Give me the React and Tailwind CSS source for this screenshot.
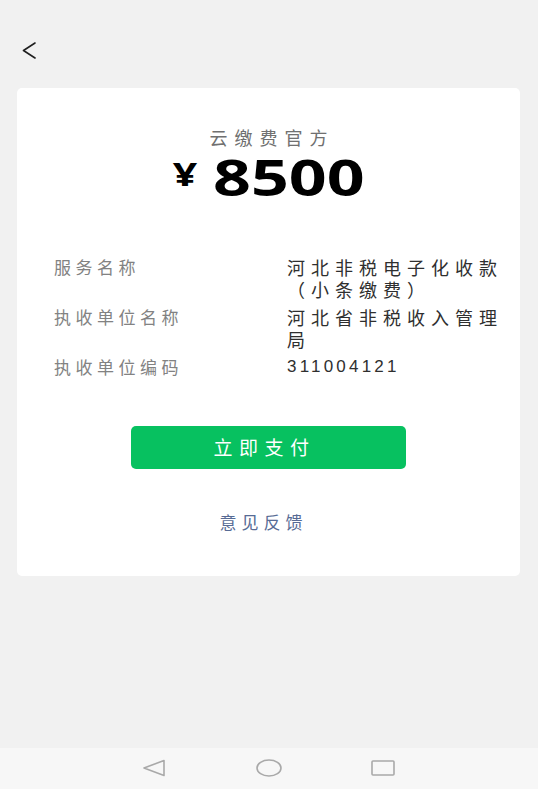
import React from 'react';

const CJK = { fontFamily: '"Noto Sans CJK SC", "Noto Sans", sans-serif' };

const ROWS = [
  { label: '服务名称', value: '河北非税电子化收款（小条缴费）' },
  { label: '执收单位名称', value: '河北省非税收入管理局' },
  { label: '执收单位编码', value: '311004121', numeric: true },
];

function NavBar() {
  return (
    <div className="h-[41px] bg-[#f7f7f7] flex items-center">
      <svg width="538" height="41" viewBox="0 0 538 41" fill="none" stroke="#a9a9a9" strokeWidth="1.6">
        <path d="M164 12.5 L144 20 L164 27.5 Z" strokeLinejoin="round" />
        <ellipse cx="269" cy="20" rx="12" ry="8" />
        <rect x="372" y="13" width="22" height="14" rx="1" />
      </svg>
    </div>
  );
}

export default function App() {
  return (
    <div className="min-h-screen bg-[#f1f1f1] flex flex-col" style={CJK}>
      {/* Header */}
      <div className="h-[88px] pt-[42px] pl-[22px]">
        <svg width="14" height="17" viewBox="0 0 14 17" fill="none" stroke="#1f1f1f" strokeWidth="1.6">
          <path d="M13 1 L1.5 8.5 L13 16" strokeLinecap="round" strokeLinejoin="round" />
        </svg>
      </div>

      {/* Card */}
      <div className="ml-[17px] mr-[18px] bg-white rounded-[5px] pt-[36px] pb-[42px]">
        <div className="text-center text-[18px] leading-[26px] tracking-[7px] text-[#707070] pl-[7px]">
          云缴费官方
        </div>
        <div className="flex justify-center">
          <div
            className="flex items-center text-black font-bold scale-x-[1.3] h-[52px]"
            style={{ fontFamily: '"Open Sans", sans-serif' }}
          >
            <span className="text-[33px] leading-[36px] mr-[12px] -mt-[5px]">¥</span>
            <span className="text-[51px] leading-[52px]">8500</span>
          </div>
        </div>

        {/* Details */}
        <div className="mt-[54px] pl-[37px] flex flex-col gap-[6px]">
          {ROWS.map((row) => (
            <div key={row.label} className="grid grid-cols-[233px_220px] text-[17px] leading-[22px]">
              <div className="text-[#828282] tracking-[4.5px]">{row.label}</div>
              <div
                className={`text-[#2f2f2f] ${row.numeric ? 'tracking-[3.2px]' : 'tracking-[6px] text-[18px]'}`}
                style={row.numeric ? { fontFamily: '"Liberation Sans", sans-serif' } : undefined}
              >
                {row.value}
              </div>
            </div>
          ))}
        </div>

        {/* Pay button */}
        <div className="mt-[48px] flex justify-center">
          <button className="w-[275px] h-[43px] rounded-[5px] bg-[#07c160] text-white text-[19px] tracking-[6.5px] pr-[8px]">
            立即支付
          </button>
        </div>

        <div className="mt-[41px] text-center text-[17px] leading-[24px] tracking-[5px] pr-[10px] text-[#576b95]">
          意见反馈
        </div>
      </div>

      <div className="flex-1" />
      <NavBar />
    </div>
  );
}
